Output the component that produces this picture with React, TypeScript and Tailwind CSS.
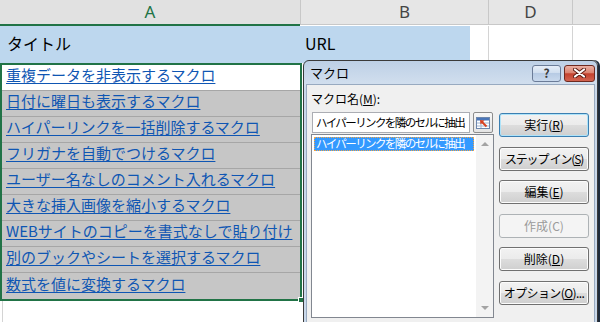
import React from "react";

const ROWS = [
  "重複データを非表示するマクロ",
  "日付に曜日も表示するマクロ",
  "ハイパーリンクを一括削除するマクロ",
  "フリガナを自動でつけるマクロ",
  "ユーザー名なしのコメント入れるマクロ",
  "大きな挿入画像を縮小するマクロ",
  "WEBサイトのコピーを書式なしで貼り付け",
  "別のブックやシートを選択するマクロ",
  "数式を値に変換するマクロ",
];

function DlgButton({
  children,
  isDefault,
  disabled,
}: {
  children: React.ReactNode;
  isDefault?: boolean;
  disabled?: boolean;
}) {
  if (disabled) {
    return (
      <div className="h-[24px] w-[90px] rounded-[3px] border border-[#adb2b5] bg-[#f4f4f4] flex items-center justify-center text-[12px] text-[#9a9a9a] whitespace-nowrap">
        {children}
      </div>
    );
  }
  return (
    <div
      className={
        isDefault
          ? "h-[24px] w-[90px] rounded-[3px] border border-[#3c7fb1] shadow-[inset_0_0_0_1px_#aee3f9] bg-[linear-gradient(#f2f2f2,#ebebeb_50%,#dddddd_50%,#cfcfcf)] flex items-center justify-center text-[12px] text-black whitespace-nowrap"
          : "h-[24px] w-[90px] rounded-[3px] border border-[#707070] shadow-[inset_0_0_0_1px_#fcfcfc] bg-[linear-gradient(#f2f2f2,#ebebeb_50%,#dddddd_50%,#cfcfcf)] flex items-center justify-center text-[12px] text-black whitespace-nowrap"
      }
    >
      {children}
    </div>
  );
}

function RefIcon() {
  return (
    <svg width="16" height="14" viewBox="0 0 16 14">
      <rect x="1.5" y="1.5" width="13" height="11" fill="#fff" stroke="#6d87ad" />
      <rect x="2" y="2" width="12" height="2.5" fill="#4a76b8" />
      <line x1="2" y1="7" x2="14" y2="7" stroke="#9fb4d2" />
      <line x1="2" y1="10" x2="14" y2="10" stroke="#9fb4d2" />
      <line x1="6" y1="4" x2="6" y2="12" stroke="#9fb4d2" />
      <path d="M11.5 10.5 L7 6" stroke="#d9401e" strokeWidth="2" />
      <path d="M5 4 L9.5 4.5 L5.5 8.5 Z" fill="#d9401e" />
    </svg>
  );
}

function MacroDialog() {
  return (
    <div className="absolute left-[303px] top-[60px] w-[295px] h-[280px] rounded-t-[6px] border border-[#3a3a3a] bg-[linear-gradient(#bdd0e6,#d2dfee_24px,#c9d8ea_30px,#c9d8ea)] px-[2px] flex flex-col shadow-[2px_0_0_#1d2b3c]">
      <div className="h-[23px] flex items-center justify-between pl-[4px]">
        <span className="text-[13px] text-black">マクロ</span>
        <div className="flex gap-[3px] mt-[1px]">
          <div className="w-[29px] h-[17px] rounded-[3px] border border-[#6b7c98] bg-[linear-gradient(#e6eef8,#cddcee_50%,#b7cbe4_50%,#c9d9ed)] flex items-center justify-center text-[12px] font-bold text-[#3a3a3a] leading-none">
            ?
          </div>
          <div className="w-[31px] h-[17px] rounded-[3px] border border-[#6e2a20] bg-[linear-gradient(#eab0a3,#db8471_45%,#c4412d_52%,#d26350)] flex items-center justify-center">
            <svg width="13" height="10" viewBox="0 0 13 10">
              <path d="M2 1.5 L11 8.5 M11 1.5 L2 8.5" stroke="#5b1b12" strokeWidth="4" strokeLinecap="round" />
              <path d="M2 1.5 L11 8.5 M11 1.5 L2 8.5" stroke="#ffffff" strokeWidth="2.2" strokeLinecap="round" />
            </svg>
          </div>
        </div>
      </div>
      <div className="flex-1 bg-[#f0f0f0] border border-[#98aac0] flex pl-[4px] pt-[6px]">
        <div className="w-[183px] flex flex-col">
          <div className="h-[16px] text-[12px] leading-[16px] text-black">
            マクロ名(<span className="underline">M</span>):
          </div>
          <div className="mt-[5px] flex items-center gap-[3px] pl-[1px]">
            <div className="w-[158px] h-[21px] bg-white border border-[#abadb3] flex items-center pl-[3px] text-[11.5px] tracking-[-1.6px] text-black whitespace-nowrap">
              ハイパーリンクを隣のセルに抽出
            </div>
            <div className="w-[20px] h-[21px] rounded-[2px] border border-[#8d8d8d] bg-[linear-gradient(#f7f7f7,#e4e4e4)] flex items-center justify-center">
              <RefIcon />
            </div>
          </div>
          <div className="mt-[1px] h-[184px] bg-white border border-[#828790] flex">
            <div className="flex-1 p-[2px]">
              <div className="h-[14px] bg-[#3399ff] border border-dotted border-[#f3a446] flex items-center pl-[1px] text-[11.5px] tracking-[-1.6px] text-white whitespace-nowrap">
                ハイパーリンクを隣のセルに抽出
              </div>
            </div>
            <div className="w-[17px] bg-[#f3f3f3] flex flex-col items-center justify-between pt-[6px] pb-[6px]">
              <svg width="8" height="5" viewBox="0 0 8 5">
                <path d="M0 5 L4 1 L8 5 Z" fill="#a3a3a3" />
              </svg>
              <svg width="8" height="5" viewBox="0 0 8 5">
                <path d="M0 0 L4 4 L8 0 Z" fill="#a3a3a3" />
              </svg>
            </div>
          </div>
        </div>
        <div className="ml-[5px] mt-[22px] flex flex-col gap-[9.6px]">
          <DlgButton isDefault>
            実行(<span className="underline">R</span>)
          </DlgButton>
          <DlgButton>
            <span className="tracking-[-1.2px]">
              ステップ イン(<span className="underline">S</span>)
            </span>
          </DlgButton>
          <DlgButton>
            編集(<span className="underline">E</span>)
          </DlgButton>
          <DlgButton disabled>作成(C)</DlgButton>
          <DlgButton>
            削除(<span className="underline">D</span>)
          </DlgButton>
          <DlgButton>
            <span className="tracking-[-0.6px]">
              オプション(<span className="underline">O</span>)...
            </span>
          </DlgButton>
        </div>
      </div>
    </div>
  );
}

export default function App() {
  return (
    <div className="relative w-[600px] h-[322px] overflow-hidden bg-white font-['Noto_Sans_CJK_JP','Noto_Sans',sans-serif]">
      {/* column headers */}
      <div className="flex h-[26px] font-['Noto_Sans',sans-serif] text-[17px]">
        <div className="w-[300px] h-[26px] bg-[#e1e1e1] border-b-2 border-[#217346] flex items-center justify-center text-[#217346]">
          A
        </div>
        <div className="w-[188px] h-[25px] bg-[#e6e6e6] border-l border-b border-[#c8c8c8] flex items-center pl-[98px] text-[#444]">
          B
        </div>
        <div className="w-[84px] h-[25px] bg-[#e6e6e6] border-l border-b border-[#c8c8c8] flex items-center justify-center text-[#444]">
          D
        </div>
        <div className="flex-1 h-[25px] bg-[#e6e6e6] border-l border-b border-[#c8c8c8]" />
      </div>

      {/* row 1 */}
      <div className="flex h-[37px] text-[16px] text-black">
        <div className="w-[300px] bg-[#bdd7ee] flex items-center pl-[7px] pb-[3px]">タイトル</div>
        <div className="w-[170px] bg-[#bdd7ee] flex items-center pl-[5px] pb-[3px]">URL</div>
        <div className="w-[18px]" />
        <div className="w-[84px] border-l border-[#d4d4d4]" />
        <div className="flex-1 border-l border-[#d4d4d4]" />
      </div>

      {/* selected range */}
      <div className="relative w-[302px] border-2 border-[#217346]">
        {ROWS.map((t, i) => (
          <div
            key={t}
            className={
              (i === 0 ? "bg-white " : "bg-[#c6c6c6] ") +
              (i < ROWS.length - 1 ? "border-b border-[#a6a6a6] " : "") +
              "h-[26px] flex items-center pl-[4px] pb-[4px] text-[15px] text-[#0f56b3] underline underline-offset-[2px] whitespace-nowrap"
            }
          >
            {t}
          </div>
        ))}
        <div className="absolute -right-[4px] -bottom-[4px] w-[6px] h-[6px] bg-[#217346] border border-white" />
      </div>
      <div className="w-[302px] h-[30px] border-l border-[#d4d4d4] ml-[2px]" />

      <MacroDialog />
    </div>
  );
}
